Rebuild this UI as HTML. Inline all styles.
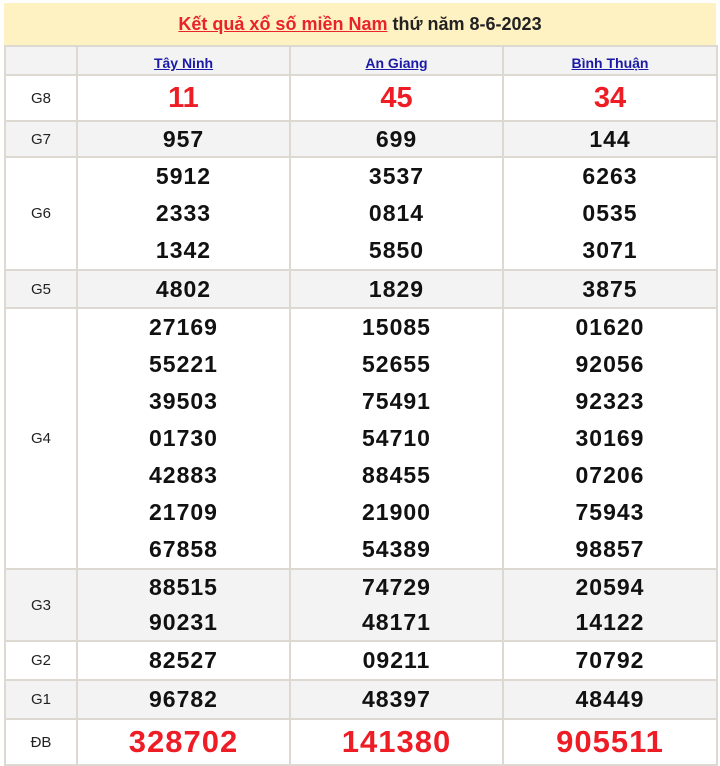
<!DOCTYPE html><html><head><meta charset="utf-8"><style>
body{margin:0;width:720px;height:762px;background:#fff;font-family:"Liberation Sans",Arial,sans-serif;position:relative;overflow:hidden}
.hd{position:absolute;left:4px;top:3px;width:712px;height:43px;background:#fff2c2;text-align:center;line-height:43px;font-size:18px;font-weight:bold;color:#222}
.hd a{color:#e8232a;text-decoration:underline}
table{position:absolute;left:4px;top:45px;border-collapse:collapse;table-layout:fixed}
td{border:2px solid #ddd8d2;padding:0;text-align:center;vertical-align:middle;font-weight:bold;font-size:23px;letter-spacing:1px;color:#111;overflow:hidden}
td.l{font-weight:normal;font-size:15px;color:#222;letter-spacing:0}
tr.g td{background:#f3f3f3}
.n{line-height:37px}
.n3{line-height:35px}
.r{color:#ee1c25;font-size:29px;letter-spacing:0}
.d{color:#ee1c25;font-size:31px;letter-spacing:1px}
a.p{color:#1a1aa6;font-size:14px;text-decoration:underline;letter-spacing:0}
</style></head><body>
<div class="hd"><a>Kết quả xổ số miền Nam</a> thứ năm 8-6-2023</div>
<table>
<colgroup><col style="width:72px"><col style="width:213px"><col style="width:213px"><col style="width:214px"></colgroup>
<tr class="g" style="height:28px"><td></td><td><a class="p">Tây Ninh</a></td><td><a class="p">An Giang</a></td><td><a class="p">Bình Thuận</a></td></tr>
<tr style="height:46px"><td class="l">G8</td><td class="r">11</td><td class="r">45</td><td class="r">34</td></tr>
<tr class="g" style="height:36px"><td class="l">G7</td><td>957</td><td>699</td><td>144</td></tr>
<tr style="height:112px"><td class="l">G6</td><td class="n">5912<br>2333<br>1342</td><td class="n">3537<br>0814<br>5850</td><td class="n">6263<br>0535<br>3071</td></tr>
<tr class="g" style="height:38px"><td class="l">G5</td><td>4802</td><td>1829</td><td>3875</td></tr>
<tr style="height:259px"><td class="l">G4</td><td class="n">27169<br>55221<br>39503<br>01730<br>42883<br>21709<br>67858</td><td class="n">15085<br>52655<br>75491<br>54710<br>88455<br>21900<br>54389</td><td class="n">01620<br>92056<br>92323<br>30169<br>07206<br>75943<br>98857</td></tr>
<tr class="g" style="height:71px"><td class="l">G3</td><td class="n3">88515<br>90231</td><td class="n3">74729<br>48171</td><td class="n3">20594<br>14122</td></tr>
<tr style="height:39px"><td class="l">G2</td><td>82527</td><td>09211</td><td>70792</td></tr>
<tr class="g" style="height:39px"><td class="l">G1</td><td>96782</td><td>48397</td><td>48449</td></tr>
<tr style="height:46px"><td class="l">ĐB</td><td class="d">328702</td><td class="d">141380</td><td class="d">905511</td></tr>
</table>
</body></html>
